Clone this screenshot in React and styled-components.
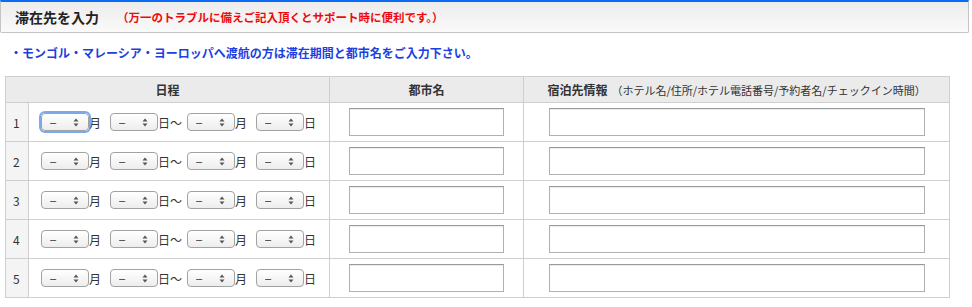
import React from 'react';
import styled, { createGlobalStyle } from 'styled-components';

const GlobalStyle = createGlobalStyle`
    body {
        margin: 0;
        background: #fff;
        font-family: "Noto Sans CJK JP", "Liberation Sans", sans-serif;
        color: #333;
    }
`

const rows = [1, 2, 3, 4, 5]

const DateSelect = ({ focused }) => (
    <SelectWrap>
        <Select $focused={focused} defaultValue="-">
            <option value="-">–</option>
        </Select>
        <Arrows width="6" height="9" viewBox="0 0 6 9">
            <path d="M3 0.5 L5.5 3.5 L0.5 3.5 Z" fill="#555" />
            <path d="M3 8.5 L5.5 5.5 L0.5 5.5 Z" fill="#555" />
        </Arrows>
    </SelectWrap>
)

const App = () => {
    return (<Page>
        <GlobalStyle />
        <TitleBar>
            <Title>滞在先を入力</Title>
            <Note>（万一のトラブルに備えご記入頂くとサポート時に便利です。）</Note>
        </TitleBar>
        <Notice>・モンゴル・マレーシア・ヨーロッパへ渡航の方は滞在期間と都市名をご入力下さい。</Notice>
        <Table>
            <colgroup>
                <col style={{ width: 23 }} />
                <col style={{ width: 301 }} />
                <col style={{ width: 194 }} />
                <col style={{ width: 426 }} />
            </colgroup>
            <thead>
                <tr>
                    <Th colSpan={2}>日程</Th>
                    <Th>都市名</Th>
                    <Th>宿泊先情報<Sub>（ホテル名/住所/ホテル電話番号/予約者名/チェックイン時間）</Sub></Th>
                </tr>
            </thead>
            <tbody>
                {rows.map(n => (
                    <tr key={n}>
                        <NumCell>{n}</NumCell>
                        <Td>
                            <DateRow>
                                <DateSelect focused={n === 1} />
                                <Unit $gap={9}>月</Unit>
                                <DateSelect />
                                <Unit $gap={5}>日〜</Unit>
                                <DateSelect />
                                <Unit $gap={9}>月</Unit>
                                <DateSelect />
                                <Unit $gap={0}>日</Unit>
                            </DateRow>
                        </Td>
                        <CenterCell>
                            <TextInput $w={155} />
                        </CenterCell>
                        <CenterCell>
                            <TextInput $w={376} />
                        </CenterCell>
                    </tr>
                ))}
            </tbody>
        </Table>
    </Page>);
}

export default App;

const Page = styled.div`
    width: 972px;
    height: 307px;
    overflow: hidden;
`

const TitleBar = styled.div`
    box-sizing: border-box;
    width: 969px;
    height: 33px;
    display: flex;
    align-items: center;
    padding-left: 14px;
    border-top: 2px solid #0a6cf5;
    border-left: 1px solid #c4c4c4;
    border-right: 1px solid #c4c4c4;
    border-bottom: 1px solid #c4c4c4;
    border-radius: 0 0 2px 2px;
    background: linear-gradient(#ececec, #fafafa);
`

const Title = styled.h2`
    margin: 0;
    font-size: 14px;
    font-weight: bold;
    color: #222;
`

const Note = styled.span`
    margin-left: 18px;
    font-size: 11.5px;
    font-weight: bold;
    color: #ee0a0a;
`

const Notice = styled.p`
    margin: 12px 0 0 10px;
    font-size: 12px;
    font-weight: bold;
    color: #1d3fe0;
    line-height: 16px;
`

const Table = styled.table`
    margin: 15px 0 0 5px;
    width: 944px;
    border-collapse: collapse;
    table-layout: fixed;
    font-size: 12px;
`

const Th = styled.th`
    height: 25px;
    padding: 0;
    background: #ebebeb;
    border: 1px solid #cfcfcf;
    font-size: 12px;
    font-weight: bold;
    color: #333;
    text-align: center;
`

const Sub = styled.span`
    margin-left: 4px;
    font-size: 11px;
    font-weight: normal;
`

const Td = styled.td`
    height: 38px;
    padding: 0;
    border: 1px solid #cfcfcf;
`

const NumCell = styled(Td)`
    background: #f4f4f4;
    padding-left: 7px;
    font-size: 12px;
    color: #333;
`

const CenterCell = styled(Td)`
    text-align: center;
`

const DateRow = styled.div`
    display: flex;
    align-items: center;
    padding-left: 12px;
`

const Unit = styled.span`
    font-size: 12px;
    color: #333;
    margin-right: ${p => p.$gap}px;
`

const SelectWrap = styled.span`
    position: relative;
    display: inline-flex;
`

const Select = styled.select`
    appearance: none;
    -webkit-appearance: none;
    box-sizing: border-box;
    width: 48px;
    height: 18px;
    margin: 0;
    padding: 0 0 0 8px;
    border: 1px solid #a2a2a2;
    border-radius: 4px;
    background: linear-gradient(#ffffff, #ededed);
    font-family: "Liberation Sans", sans-serif;
    font-size: 11px;
    color: #333;
    outline: none;
    box-shadow: ${p => p.$focused ? '0 0 0 2px rgba(80, 140, 230, 0.75)' : 'none'};
`

const Arrows = styled.svg`
    position: absolute;
    right: 10px;
    top: 5px;
    pointer-events: none;
`

const TextInput = styled.input`
    box-sizing: border-box;
    width: ${p => p.$w}px;
    height: 28px;
    margin: 0;
    border: 1px solid #b0b0b0;
    border-top-color: #999;
    box-shadow: inset 0 1px 1px rgba(0, 0, 0, 0.08);
    background: #fff;
    vertical-align: middle;
`
